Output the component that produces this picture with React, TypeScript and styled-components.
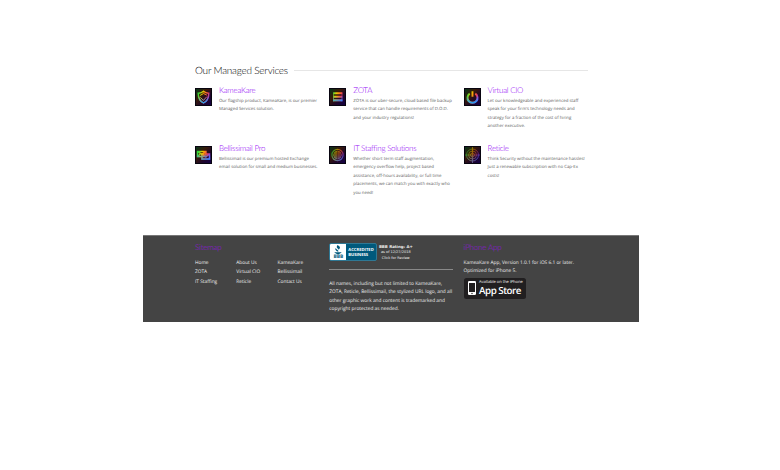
import React from "react";
import styled, { createGlobalStyle } from "styled-components";

const Global = createGlobalStyle`
  * { box-sizing: border-box; }
  body { margin: 0; background: #fff; font-family: "Open Sans", sans-serif; text-rendering: geometricPrecision; }
  h2, h3, p, ul { margin: 0; padding: 0; font-weight: 400; }
`;

const Page = styled.div`
  width: 780px;
  height: 470px;
  overflow: hidden;
  padding-top: 63px;
`;

const Services = styled.section`
  height: 172px;
  margin-left: 195px;
  width: 393px;
`;

const Title = styled.h2`
  display: flex;
  align-items: center;
  gap: 6px;
  height: 14px;
  padding-top: 1px;
  font: 300 10px/14px Lato, sans-serif;
  letter-spacing: -0.22px;
  color: #000;
  white-space: nowrap;
  &::after {
    content: "";
    flex: 1;
    height: 1px;
    background: #e6e6e6;
  }
`;

const Grid = styled.div`
  display: grid;
  grid-template-columns: 134.3px 134.3px 126px;
  grid-template-rows: 58px 60px;
  padding-top: 8px;
`;

const Card = styled.article`
  display: flex;
  gap: 7px;
  padding-top: 3px;
`;

const Icon = styled.svg`
  display: block;
  flex: none;
  width: 17px;
  height: 18px;
`;

const CardTitle = styled.h3`
  margin-top: -4px;
  height: 13px;
  font: 300 8px/12px Lato, sans-serif;
  letter-spacing: -0.28px;
  color: #9000f5;
  white-space: nowrap;
`;

const Lines = styled.p<{ $size?: number; $color?: string; $leading?: number }>`
  font-size: ${(p) => p.$size ?? 4.33}px;
  line-height: ${(p) => p.$leading ?? 8.45}px;
  color: ${(p) => p.$color ?? "#5c5c5c"};
  white-space: pre;
`;

const Footer = styled.footer`
  display: grid;
  grid-template-columns: 134.3px 134.3px 126px;
  width: 496px;
  height: 87px;
  margin-left: 143px;
  padding-left: 52px;
  background: #444;
  border-top: 1px solid #777;
  color: #eee;
`;

const FooterTitle = styled.h3`
  margin-top: 6px;
  height: 11px;
  font: 300 7.9px/11px Lato, sans-serif;
  letter-spacing: -0.12px;
  color: #980fe0;
`;

const Links = styled.ul`
  display: grid;
  grid-template-columns: 41.3px 41.3px 45px;
  grid-auto-rows: 9.5px;
  margin-top: 5.9px;
  list-style: none;
  font-size: 4.8px;
  line-height: 9.5px;
`;

const AppInfo = styled.div`
  margin-top: 5.6px;
`;

const Rating = styled.div`
  display: flex;
  gap: 1px;
  margin-top: 7px;
  height: 18px;
`;

const Seal = styled.div`
  display: flex;
  flex: none;
  width: 48px;
  height: 18px;
  border: 0.5px solid #2f7894;
  border-radius: 2px;
  background: #00597c;
  overflow: hidden;
`;

const SealMark = styled.div`
  display: flex;
  flex: none;
  flex-direction: column;
  align-items: center;
  width: 16px;
  background: #fff;
  color: #00597c;
  font: 700 4.8px/5px "Open Sans", sans-serif;
  svg { display: block; width: 10px; height: 11px; }
`;

const SealText = styled.div`
  padding: 4px 0 0 2px;
  color: #fff;
  font: 700 4.15px/5px "Open Sans", sans-serif;
  white-space: pre;
`;

const RatingText = styled.div`
  width: 35px;
  text-align: center;
  font: 3.5px/5.8px "DejaVu Sans", sans-serif;
  white-space: nowrap;
  b { display: block; font-size: 3.9px; line-height: 7px; }
  span { display: block; }
`;

const Divider = styled.div`
  width: 124px;
  height: 1px;
  margin: 8px 0 9.6px;
  background: #898989;
`;

const StoreBadge = styled.div`
  display: flex;
  align-items: center;
  gap: 3px;
  width: 62px;
  height: 21px;
  margin-top: 2.4px;
  padding-left: 4.5px;
  border-radius: 2.5px;
  background: #211f20;
  color: #fff;
  svg { display: block; width: 8px; height: 14px; flex: none; }
`;

const StoreText = styled.div`
  white-space: nowrap;
  small { display: block; font: 4px/6px "Open Sans", sans-serif; }
  strong { display: block; font: 600 9.8px/10px "Open Sans", sans-serif; letter-spacing: -0.5px; }
`;

type Kind = "shield" | "server" | "power" | "mail" | "people" | "reticle";

const glyphs: Record<Kind, React.ReactNode> = {
  shield: (
    <>
      <path strokeWidth="1.4" d="M3.2 5.2C5 5.3 6.9 4.7 8.5 3.3C10.1 4.7 12 5.3 13.8 5.2C13.8 10 12.3 13 8.5 15C4.7 13 3.2 10 3.2 5.2Z" />
      <path d="M5 7.5L8.5 5.5L12 7.2M5.3 9.5L8.5 12.3L11.8 8.7" />
    </>
  ),
  server: (
    <>
      <path strokeWidth="2" d="M4.3 5.3H13.3M4.3 8.8H13.3M4.3 12.3H13.3" />
      <path strokeWidth="0.6" d="M4.5 4.5V13.3M13 4.5V13.3" />
    </>
  ),
  power: <path strokeWidth="1.9" d="M5.7 5.6A5 5 0 1 0 11.3 5.6M8.5 3.3V8.7" />,
  mail: (
    <>
      <path strokeWidth="1.4" d="M2.5 5.5H11V10.5H2.5ZM2.5 5.5L6.7 8.4L11 5.5" />
      <path strokeWidth="1.4" d="M7 8H14.5V13H7ZM7 8L10.8 10.8L14.5 8M3 10L5.2 8" />
    </>
  ),
  people: (
    <g strokeWidth="0.8">
      <circle cx="8.5" cy="9" r="5.6" strokeWidth="1.2" />
      <circle cx="8.5" cy="9" r="3.8" />
      <path d="M5 7H12M4 9H13M5 11H12M7 5V13M10 5V13" />
    </g>
  ),
  reticle: (
    <g strokeWidth="0.8">
      <circle cx="8.5" cy="9" r="6" />
      <circle cx="8.5" cy="9" r="4" />
      <circle cx="8.5" cy="9" r="2" />
      <path d="M1 9H16M8.5 1V17" />
    </g>
  ),
};

function ServiceIcon({ kind }: { kind: Kind }) {
  const dim = kind === "people" || kind === "reticle";
  return (
    <Icon viewBox="0 0 17 18">
      <defs>
        <linearGradient id={`line-${kind}`} gradientUnits="userSpaceOnUse" x1="3" y1="7" x2="14" y2="11">
          <stop offset="0" stopColor="#35d83c" />
          <stop offset=".3" stopColor="#e5c800" />
          <stop offset=".5" stopColor="#ff8a10" />
          <stop offset=".75" stopColor="#f04050" />
          <stop offset="1" stopColor="#9040f0" />
        </linearGradient>
        <linearGradient id={`cool-${kind}`} gradientUnits="userSpaceOnUse" x1="0" y1="8" x2="0" y2="14">
          <stop offset="0" stopColor="#18a0ff" stopOpacity="0" />
          <stop offset="1" stopColor="#18a0ff" stopOpacity=".9" />
        </linearGradient>
        <linearGradient id={`back-${kind}`} x1="0" y1="0" x2="1" y2="1">
          <stop offset="0" stopColor="#06331a" />
          <stop offset=".35" stopColor="#381b08" />
          <stop offset=".65" stopColor="#210728" />
          <stop offset="1" stopColor="#130044" />
        </linearGradient>
      </defs>
      <path fill="#080510" d="M0 0H17V18H0Z" />
      <path fill={`url(#back-${kind})`} d="M1 1H16V17H1Z" />
      <g fill="none" stroke={`url(#line-${kind})`} opacity={dim ? 0.6 : 1}>
        {glyphs[kind]}
      </g>
      <g fill="none" stroke={`url(#cool-${kind})`} opacity={dim ? 0.5 : 1}>
        {glyphs[kind]}
      </g>
    </Icon>
  );
}

const services: { kind: Kind; name: string; text: string }[] = [
  { kind: "shield", name: "KameaKare", text: "Our flagship product, KameaKare, is our premier\nManaged Services solution." },
  { kind: "server", name: "ZOTA", text: "ZOTA is our uber-secure, cloud based file backup\nservice that can handle requirements of D.O.D.\nand your industry regulations!" },
  { kind: "power", name: "Virtual CIO", text: "Let our knowledgeable and experienced staff\nspeak for your firm's technology needs and\nstrategy for a fraction of the cost of hiring\nanother executive." },
  { kind: "mail", name: "Bellissimail Pro", text: "Bellissimail is our premium hosted Exchange\nemail solution for small and medium businesses." },
  { kind: "people", name: "IT Staffing Solutions", text: "Whether short term staff augmentation,\nemergency overflow help, project based\nassistance, off-hours availability, or full time\nplacements, we can match you with exactly who\nyou need!" },
  { kind: "reticle", name: "Reticle", text: "Think Security without the maintenance hassles!\nJust a renewable subscription with no Cap-Ex\ncosts!" },
];

const links = ["Home", "About Us", "KameaKare", "ZOTA", "Virtual CIO", "Bellissimail", "IT Staffing", "Reticle", "Contact Us"];

export default function App() {
  return (
    <Page>
      <Global />
      <Services>
        <Title>Our Managed Services</Title>
        <Grid>
          {services.map((s) => (
            <Card key={s.name}>
              <ServiceIcon kind={s.kind} />
              <div>
                <CardTitle>{s.name}</CardTitle>
                <Lines>{s.text}</Lines>
              </div>
            </Card>
          ))}
        </Grid>
      </Services>
      <Footer>
        <div>
          <FooterTitle>Sitemap</FooterTitle>
          <Links>
            {links.map((l) => (
              <li key={l}>{l}</li>
            ))}
          </Links>
        </div>
        <div>
          <Rating>
            <Seal>
              <SealMark>
                <svg viewBox="0 0 10 12" fill="#00597c">
                  <path d="M4.5 1C8 3 7.8 4.4 5.6 6.2C5.9 4.8 2 4.5 4.5 1ZM2.8 4C2 6 6.6 6.2 5.2 8.5C3.5 7.5.8 6.5 2.8 4ZM1 9H9L8 10H7L6.7 11.3H3.3L3 10H2Z" />
                </svg>
                BBB
              </SealMark>
              <SealText>{"ACCREDITED\nBUSINESS"}</SealText>
            </Seal>
            <RatingText>
              <b>BBB Rating: A+</b>
              <span>as of 12/27/2018</span>
              <span>Click for Review</span>
            </RatingText>
          </Rating>
          <Divider />
          <Lines $size={4.8} $color="#eee">
            {"All names, including but not limited to KameaKare,\nZOTA, Reticle, Bellissimail, the stylized URL logo, and all\nother graphic work and content is trademarked and\ncopyright protected as needed."}
          </Lines>
        </div>
        <div>
          <FooterTitle>iPhone App</FooterTitle>
          <AppInfo>
            <Lines $size={4.8} $color="#eee">
              {"KameaKare App, Version 1.0.1 for iOS 6.1 or later.\nOptimized for iPhone 5."}
            </Lines>
          </AppInfo>
          <StoreBadge>
            <svg viewBox="0 0 8 14">
              <rect width="8" height="14" rx="1.3" fill="#fff" />
              <rect x="1" y="2" width="6" height="9" fill="#211f20" />
              <circle cx="4" cy="12.5" r=".7" fill="#211f20" />
            </svg>
            <StoreText>
              <small>Available on the iPhone</small>
              <strong>App Store</strong>
            </StoreText>
          </StoreBadge>
        </div>
      </Footer>
    </Page>
  );
}
